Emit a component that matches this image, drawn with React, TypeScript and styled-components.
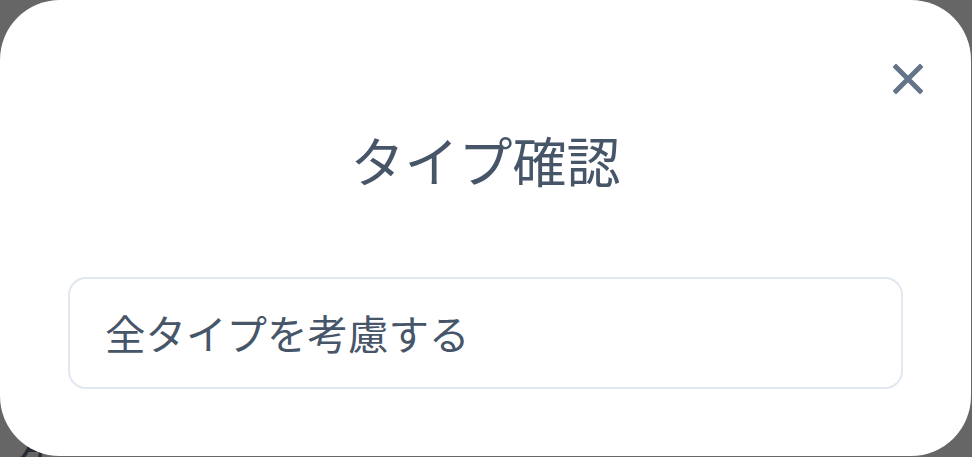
import * as React from "react";
import styled, { createGlobalStyle } from "styled-components";

const GlobalStyle = createGlobalStyle`
  html, body {
    margin: 0;
    padding: 0;
    background: #666666;
  }
  body {
    font-family: "Noto Sans CJK JP", "Noto Sans", sans-serif;
  }
`;

const App = () => {
  return (
    <>
      <GlobalStyle />
      <Screen>
        <BehindText>ケ</BehindText>
        <Modal>
          <CloseButton aria-label="閉じる">
            <svg width="30" height="30" viewBox="0 0 30 30" fill="none">
              <path
                d="M3 3 L27 27 M27 3 L3 27"
                stroke="#64748b"
                strokeWidth="5"
                strokeLinecap="square"
              />
            </svg>
          </CloseButton>
          <Title>タイプ確認</Title>
          <Option>全タイプを考慮する</Option>
        </Modal>
      </Screen>
    </>
  );
};

const Screen = styled.div`
  position: relative;
  width: 972px;
  height: 457px;
  overflow: hidden;
  background: #666666;
`;

const BehindText = styled.div`
  position: absolute;
  left: 16px;
  top: 436px;
  font-size: 40px;
  line-height: 1;
  color: #262b36;
`;

const Modal = styled.div`
  position: relative;
  box-sizing: border-box;
  width: 971px;
  height: 456px;
  background: #ffffff;
  border-radius: 60px;
  padding: 121px 68px 0;
  display: flex;
  flex-direction: column;
`;

const CloseButton = styled.button`
  position: absolute;
  top: 64px;
  right: 48px;
  width: 30px;
  height: 30px;
  padding: 0;
  border: none;
  background: transparent;
  display: flex;
  align-items: center;
  justify-content: center;
  cursor: pointer;
`;

const Title = styled.h2`
  margin: 0;
  text-align: center;
  font-size: 54px;
  font-weight: 400;
  line-height: 78px;
  color: #475569;
`;

const Option = styled.div`
  margin-top: 78px;
  box-sizing: border-box;
  height: 112px;
  border: 2px solid #e2e8f0;
  border-radius: 18px;
  padding: 0 35px;
  display: flex;
  align-items: center;
  font-size: 40.5px;
  font-weight: 400;
  line-height: 1;
  color: #475569;
`;

export default App;
